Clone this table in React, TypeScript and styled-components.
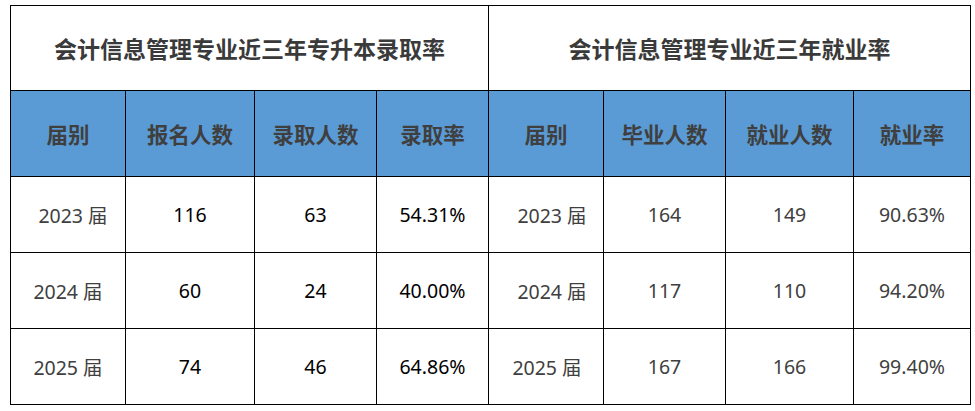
import React from "react";
import styled, { createGlobalStyle } from "styled-components";

const GlobalStyle = createGlobalStyle`
  body {
    margin: 0;
    background: #ffffff;
    font-family: "Noto Sans", "Noto Sans CJK SC", sans-serif;
  }
`;

const Page = styled.div`
  padding: 5px 0 0 10px;
`;

const Table = styled.table`
  border-collapse: collapse;
  table-layout: fixed;
  width: 960px;
  border: 1px solid #000;
`;

const TitleCell = styled.th`
  height: 84px;
  padding: 0;
  border: 1px solid #000;
  font-family: "Noto Sans CJK SC", sans-serif;
  font-size: 23px;
  font-weight: 700;
  color: #3a3a3a;
  text-align: center;
  vertical-align: middle;
`;

const HeadCell = styled.th`
  height: 85px;
  padding: 0;
  border: 1px solid #000;
  background: #5b9bd5;
  font-family: "Noto Sans CJK SC", sans-serif;
  font-size: 21.5px;
  font-weight: 700;
  color: #3f3f3f;
  text-align: center;
  vertical-align: middle;
`;

const Cell = styled.td<{ $dark?: boolean; $shift?: number }>`
  height: 75px;
  padding: 0 0 0 ${(p) => (p.$shift ? p.$shift : 0)}px;
  border: 1px solid #000;
  font-family: "Noto Sans", "Noto Sans CJK SC", sans-serif;
  font-size: 19.5px;
  color: ${(p) => (p.$dark ? "#000000" : "#404040")};
  text-align: center;
  vertical-align: middle;
`;

const widths = [115, 129, 122, 112, 115, 122, 128, 117];

const heads = ["届别", "报名人数", "录取人数", "录取率", "届别", "毕业人数", "就业人数", "就业率"];

const rows = [
  { left: ["2023 届", "116", "63", "54.31%"], right: ["2023 届", "164", "149", "90.63%"], s1: 10, s2: 12 },
  { left: ["2024 届", "60", "24", "40.00%"], right: ["2024 届", "117", "110", "94.20%"], s1: 0, s2: 12 },
  { left: ["2025 届", "74", "46", "64.86%"], right: ["2025 届", "167", "166", "99.40%"], s1: 0, s2: 2 },
];

export default function App() {
  return (
    <Page>
      <GlobalStyle />
      <Table>
        <colgroup>
          {widths.map((w, i) => (
            <col key={i} style={{ width: w }} />
          ))}
        </colgroup>
        <thead>
          <tr>
            <TitleCell colSpan={4}>会计信息管理专业近三年专升本录取率</TitleCell>
            <TitleCell colSpan={4}>会计信息管理专业近三年就业率</TitleCell>
          </tr>
          <tr>
            {heads.map((h, i) => (
              <HeadCell key={i}>{h}</HeadCell>
            ))}
          </tr>
        </thead>
        <tbody>
          {rows.map((r, i) => (
            <tr key={i}>
              <Cell $shift={r.s1}>{r.left[0]}</Cell>
              <Cell $dark>{r.left[1]}</Cell>
              <Cell $dark>{r.left[2]}</Cell>
              <Cell $dark>{r.left[3]}</Cell>
              <Cell $shift={r.s2}>{r.right[0]}</Cell>
              <Cell>{r.right[1]}</Cell>
              <Cell>{r.right[2]}</Cell>
              <Cell>{r.right[3]}</Cell>
            </tr>
          ))}
        </tbody>
      </Table>
    </Page>
  );
}
